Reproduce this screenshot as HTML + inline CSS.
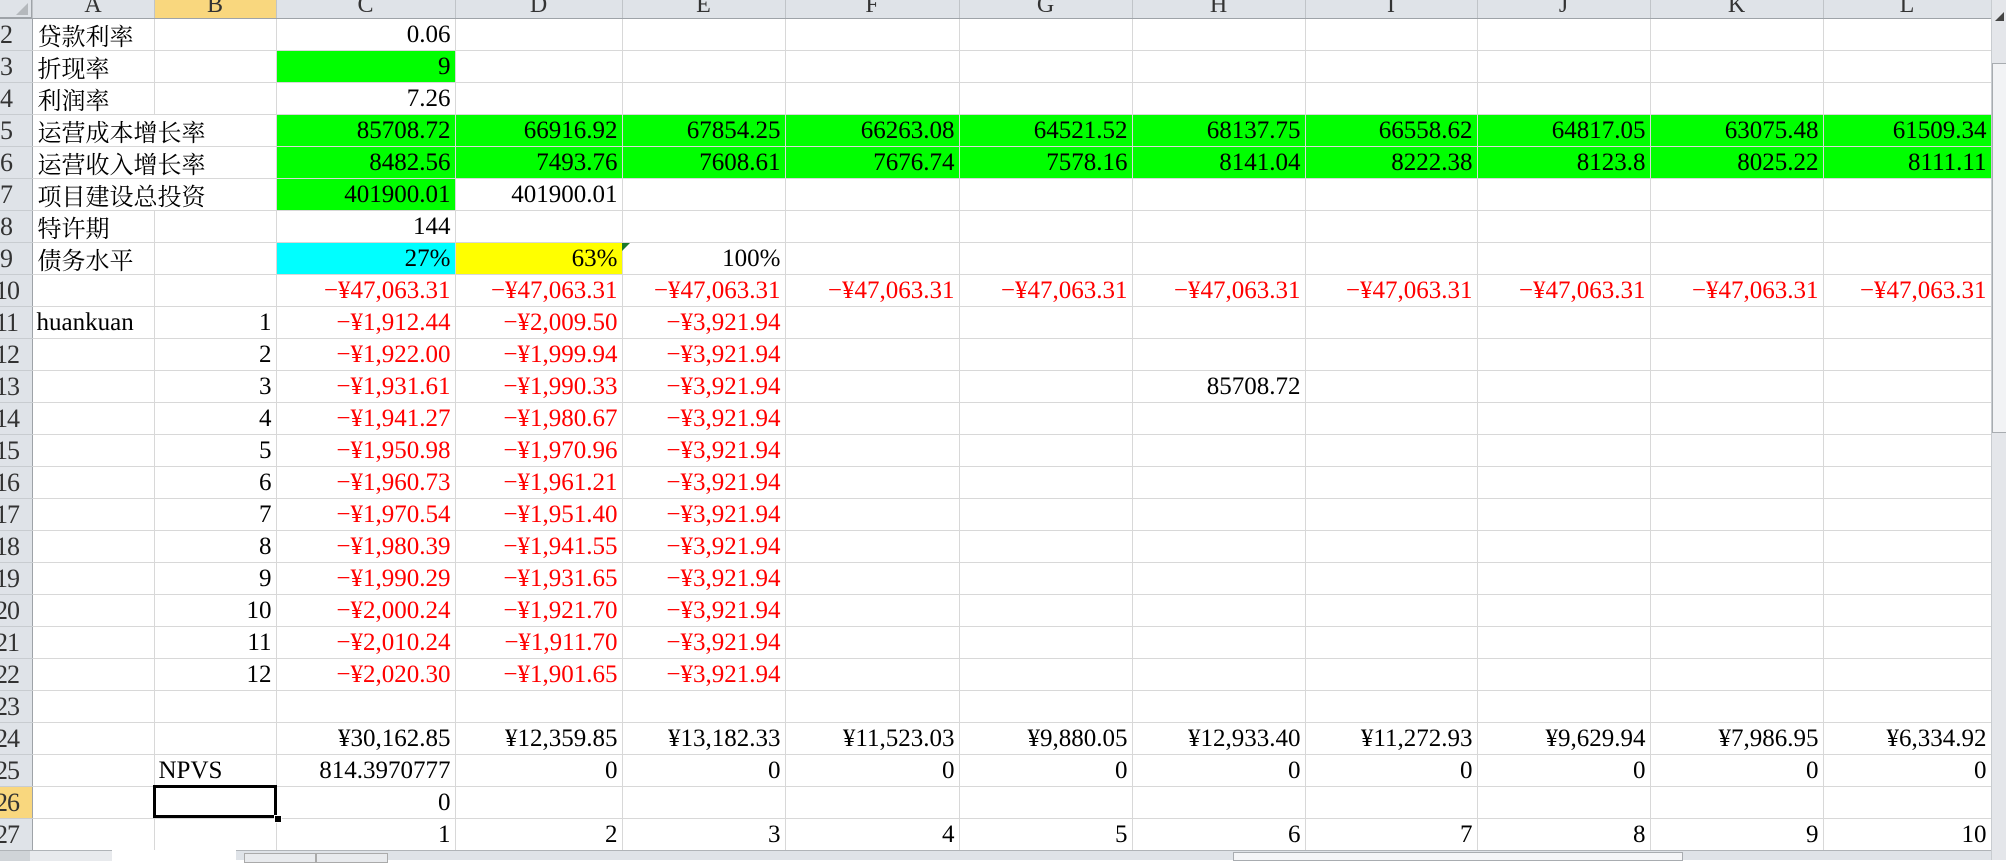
<!DOCTYPE html>
<html><head><meta charset="utf-8"><style>
body{margin:0;width:2006px;height:860px;overflow:hidden;background:#fff;position:relative;font-family:"Liberation Serif","Noto Serif CJK SC",serif;}
table{position:absolute;left:0;top:0;border-collapse:collapse;table-layout:fixed;width:1991px;}
td{height:31px;border-right:1px solid #d8d8d8;border-bottom:1px solid #d8d8d8;padding:0 4px;font-size:25px;letter-spacing:0;line-height:31px;white-space:nowrap;overflow:hidden;text-align:right;color:#000;vertical-align:bottom;box-sizing:border-box}
tr.h td{height:18px;line-height:10px;background:#dfe3e8;border-right:1px solid #c0c4c8;border-bottom:1px solid #9ea3a8;text-align:center;font-size:24px;color:#333;vertical-align:top;overflow:hidden;letter-spacing:0}
td.r{background:#dfe3e8;border-right:1px solid #9ea3a8;border-bottom:1px solid #c8ccd0;text-align:left;padding:0;font-size:26px;color:#333;letter-spacing:-1px}
td.r2{text-indent:-5px}
td.l{text-align:left}
td.cn{font-family:"Noto Serif CJK SC","Liberation Serif",serif;font-size:24px;letter-spacing:0;text-align:left;padding-left:5px}
.g{background:#00ff00}.c{background:#00ffff}.y{background:#ffff00}
.red{color:#f00}
.sel{background:#f9d77e!important}
</style></head><body>
<table>
<colgroup><col style="width:32px"><col style="width:122px"><col style="width:122px"><col style="width:179px"><col style="width:167px"><col style="width:163px"><col style="width:174px"><col style="width:173px"><col style="width:173px"><col style="width:172px"><col style="width:173px"><col style="width:173px"><col style="width:168px"></colgroup>
<tr class="h"><td style="background:#dfe3e8"></td><td>A</td><td class="sel">B</td><td>C</td><td>D</td><td>E</td><td>F</td><td>G</td><td>H</td><td>I</td><td>J</td><td>K</td><td>L</td></tr>
<tr><td class="r">2</td><td class="cn">贷款利率</td><td></td><td>0.06</td><td></td><td></td><td></td><td></td><td></td><td></td><td></td><td></td><td></td></tr>
<tr><td class="r">3</td><td class="cn">折现率</td><td></td><td class="g">9</td><td></td><td></td><td></td><td></td><td></td><td></td><td></td><td></td><td></td></tr>
<tr><td class="r">4</td><td class="cn">利润率</td><td></td><td>7.26</td><td></td><td></td><td></td><td></td><td></td><td></td><td></td><td></td><td></td></tr>
<tr><td class="r">5</td><td class="cn" colspan="2">运营成本增长率</td><td class="g">85708.72</td><td class="g">66916.92</td><td class="g">67854.25</td><td class="g">66263.08</td><td class="g">64521.52</td><td class="g">68137.75</td><td class="g">66558.62</td><td class="g">64817.05</td><td class="g">63075.48</td><td class="g">61509.34</td></tr>
<tr><td class="r">6</td><td class="cn" colspan="2">运营收入增长率</td><td class="g">8482.56</td><td class="g">7493.76</td><td class="g">7608.61</td><td class="g">7676.74</td><td class="g">7578.16</td><td class="g">8141.04</td><td class="g">8222.38</td><td class="g">8123.8</td><td class="g">8025.22</td><td class="g">8111.11</td></tr>
<tr><td class="r">7</td><td class="cn" colspan="2">项目建设总投资</td><td class="g">401900.01</td><td>401900.01</td><td></td><td></td><td></td><td></td><td></td><td></td><td></td><td></td></tr>
<tr><td class="r">8</td><td class="cn">特许期</td><td></td><td>144</td><td></td><td></td><td></td><td></td><td></td><td></td><td></td><td></td><td></td></tr>
<tr><td class="r">9</td><td class="cn">债务水平</td><td></td><td class="c">27%</td><td class="y">63%</td><td>100%</td><td></td><td></td><td></td><td></td><td></td><td></td><td></td></tr>
<tr><td class="r r2">10</td><td></td><td></td><td class="red">−¥47,063.31</td><td class="red">−¥47,063.31</td><td class="red">−¥47,063.31</td><td class="red">−¥47,063.31</td><td class="red">−¥47,063.31</td><td class="red">−¥47,063.31</td><td class="red">−¥47,063.31</td><td class="red">−¥47,063.31</td><td class="red">−¥47,063.31</td><td class="red">−¥47,063.31</td></tr>
<tr><td class="r r2">11</td><td class="l">huankuan</td><td>1</td><td class="red">−¥1,912.44</td><td class="red">−¥2,009.50</td><td class="red">−¥3,921.94</td><td></td><td></td><td></td><td></td><td></td><td></td><td></td></tr>
<tr><td class="r r2">12</td><td></td><td>2</td><td class="red">−¥1,922.00</td><td class="red">−¥1,999.94</td><td class="red">−¥3,921.94</td><td></td><td></td><td></td><td></td><td></td><td></td><td></td></tr>
<tr><td class="r r2">13</td><td></td><td>3</td><td class="red">−¥1,931.61</td><td class="red">−¥1,990.33</td><td class="red">−¥3,921.94</td><td></td><td></td><td>85708.72</td><td></td><td></td><td></td><td></td></tr>
<tr><td class="r r2">14</td><td></td><td>4</td><td class="red">−¥1,941.27</td><td class="red">−¥1,980.67</td><td class="red">−¥3,921.94</td><td></td><td></td><td></td><td></td><td></td><td></td><td></td></tr>
<tr><td class="r r2">15</td><td></td><td>5</td><td class="red">−¥1,950.98</td><td class="red">−¥1,970.96</td><td class="red">−¥3,921.94</td><td></td><td></td><td></td><td></td><td></td><td></td><td></td></tr>
<tr><td class="r r2">16</td><td></td><td>6</td><td class="red">−¥1,960.73</td><td class="red">−¥1,961.21</td><td class="red">−¥3,921.94</td><td></td><td></td><td></td><td></td><td></td><td></td><td></td></tr>
<tr><td class="r r2">17</td><td></td><td>7</td><td class="red">−¥1,970.54</td><td class="red">−¥1,951.40</td><td class="red">−¥3,921.94</td><td></td><td></td><td></td><td></td><td></td><td></td><td></td></tr>
<tr><td class="r r2">18</td><td></td><td>8</td><td class="red">−¥1,980.39</td><td class="red">−¥1,941.55</td><td class="red">−¥3,921.94</td><td></td><td></td><td></td><td></td><td></td><td></td><td></td></tr>
<tr><td class="r r2">19</td><td></td><td>9</td><td class="red">−¥1,990.29</td><td class="red">−¥1,931.65</td><td class="red">−¥3,921.94</td><td></td><td></td><td></td><td></td><td></td><td></td><td></td></tr>
<tr><td class="r r2">20</td><td></td><td>10</td><td class="red">−¥2,000.24</td><td class="red">−¥1,921.70</td><td class="red">−¥3,921.94</td><td></td><td></td><td></td><td></td><td></td><td></td><td></td></tr>
<tr><td class="r r2">21</td><td></td><td>11</td><td class="red">−¥2,010.24</td><td class="red">−¥1,911.70</td><td class="red">−¥3,921.94</td><td></td><td></td><td></td><td></td><td></td><td></td><td></td></tr>
<tr><td class="r r2">22</td><td></td><td>12</td><td class="red">−¥2,020.30</td><td class="red">−¥1,901.65</td><td class="red">−¥3,921.94</td><td></td><td></td><td></td><td></td><td></td><td></td><td></td></tr>
<tr><td class="r r2">23</td><td></td><td></td><td></td><td></td><td></td><td></td><td></td><td></td><td></td><td></td><td></td><td></td></tr>
<tr><td class="r r2">24</td><td></td><td></td><td>¥30,162.85</td><td>¥12,359.85</td><td>¥13,182.33</td><td>¥11,523.03</td><td>¥9,880.05</td><td>¥12,933.40</td><td>¥11,272.93</td><td>¥9,629.94</td><td>¥7,986.95</td><td>¥6,334.92</td></tr>
<tr><td class="r r2">25</td><td></td><td class="l">NPVS</td><td>814.3970777</td><td>0</td><td>0</td><td>0</td><td>0</td><td>0</td><td>0</td><td>0</td><td>0</td><td>0</td></tr>
<tr><td class="r r2 sel">26</td><td></td><td></td><td>0</td><td></td><td></td><td></td><td></td><td></td><td></td><td></td><td></td><td></td></tr>
<tr><td class="r r2">27</td><td></td><td></td><td>1</td><td>2</td><td>3</td><td>4</td><td>5</td><td>6</td><td>7</td><td>8</td><td>9</td><td>10</td></tr>
</table>
<div style="position:absolute;left:0;top:0;width:32px;height:18px;background:#dfe3e8;border-right:1px solid #9ea3a8;border-bottom:1px solid #9ea3a8;box-sizing:border-box"><div style="position:absolute;right:3px;bottom:2px;width:0;height:0;border-left:12px solid transparent;border-bottom:12px solid #b4b8bc"></div></div>
<div style="position:absolute;left:153px;top:785px;width:124px;height:33px;border:3px solid #000;box-sizing:border-box"></div>
<div style="position:absolute;left:274px;top:815px;width:6px;height:6px;background:#000;border:1px solid #fff"></div>
<div style="position:absolute;left:622px;top:243px;width:0;height:0;border-right:8px solid transparent;border-top:8px solid #1a7a2a"></div>
<div style="position:absolute;left:1991px;top:0;width:15px;height:860px;background:#e4e6ea;border-left:1px solid #c8ccd0;box-sizing:border-box">
 <div style="position:absolute;left:3px;top:12px;width:0;height:0;border-left:9px solid transparent;border-bottom:9px solid #444"></div>
 <div style="position:absolute;left:0;top:63px;width:15px;height:370px;background:#f2f3f5;border:1px solid #a8acb0;box-sizing:border-box"></div>
</div>
<div style="position:absolute;left:0;top:850px;width:1991px;height:10px;background:#dfe3e8;border-top:1px solid #b0b4b8;box-sizing:border-box">
 <div style="position:absolute;left:0;top:0;width:30px;height:10px;background:#d0d4d8"></div>
 <div style="position:absolute;left:30px;top:0;width:82px;height:10px;background:#e8eaed;border-right:1px solid #aaa"></div>
 <div style="position:absolute;left:112px;top:-1px;width:124px;height:11px;background:#fff"></div>
 <div style="position:absolute;left:244px;top:2px;width:70px;height:8px;background:#e8eaed;border:1px solid #aaa"></div>
 <div style="position:absolute;left:316px;top:2px;width:70px;height:8px;background:#e8eaed;border:1px solid #aaa"></div>
 <div style="position:absolute;left:1233px;top:1px;width:450px;height:9px;background:#f4f5f7;border:1px solid #a8acb0;box-sizing:border-box"></div>
</div>
</body></html>
